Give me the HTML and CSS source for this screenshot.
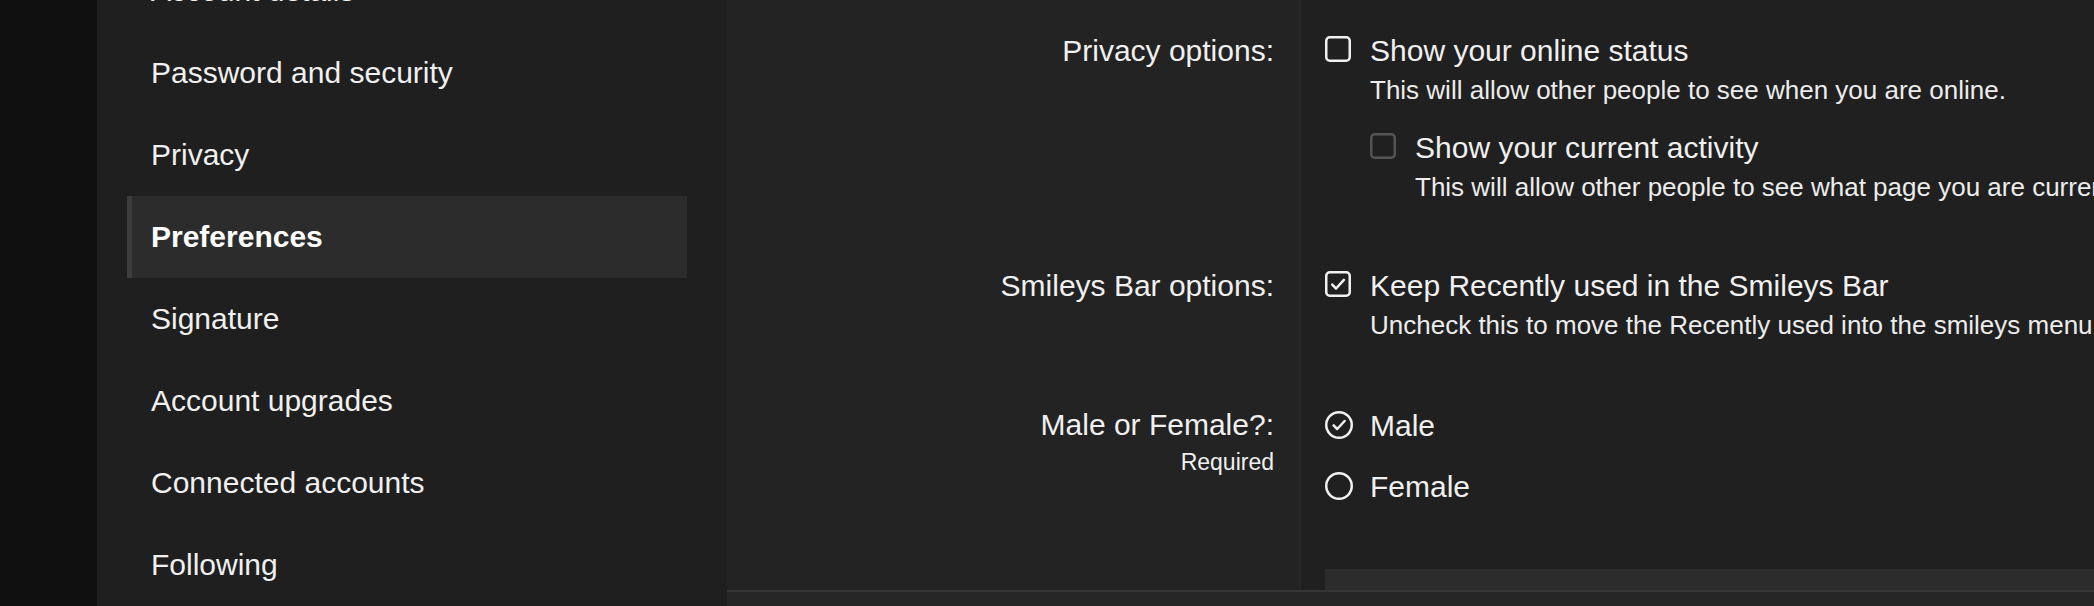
FILE: index.html
```html
<!DOCTYPE html>
<html lang="en">
<head>
<meta charset="utf-8">
<title>Preferences</title>
<link rel="stylesheet" href="styles.css">
</head>
<body>
<div class="page">
  <div class="gutter"></div>
  <aside class="sidebar">
    <nav class="nav">
      <a class="nav-item">Account details</a>
      <a class="nav-item">Password and security</a>
      <a class="nav-item">Privacy</a>
      <a class="nav-item is-active">Preferences</a>
      <a class="nav-item">Signature</a>
      <a class="nav-item">Account upgrades</a>
      <a class="nav-item">Connected accounts</a>
      <a class="nav-item">Following</a>
    </nav>
  </aside>
  <main class="main">
    <div class="form-scroll">
      <div class="form">
        <div class="form-row">
          <div class="form-label">Privacy options:</div>
          <div class="form-input">
            <ul class="choices">
              <li class="choice">
                <svg class="icon icon-box" viewBox="0 0 26 26"><rect x="1.25" y="1.25" width="23.5" height="23.5" rx="3.5" fill="none" stroke="currentColor" stroke-width="2.5"/></svg>
                <div class="choice-body">
                  <div class="choice-text">Show your online status</div>
                  <div class="hint">This will allow other people to see when you are online.</div>
                  <ul class="choices nested">
                    <li class="choice is-disabled">
                      <svg class="icon icon-box" viewBox="0 0 26 26"><rect x="1.25" y="1.25" width="23.5" height="23.5" rx="3.5" fill="none" stroke="currentColor" stroke-width="2.5"/></svg>
                      <div class="choice-body">
                        <div class="choice-text">Show your current activity</div>
                        <div class="hint">This will allow other people to see what page you are currently viewing.</div>
                      </div>
                    </li>
                  </ul>
                </div>
              </li>
            </ul>
          </div>
        </div>

        <div class="form-row">
          <div class="form-label">Smileys Bar options:</div>
          <div class="form-input">
            <ul class="choices">
              <li class="choice">
                <svg class="icon icon-box" viewBox="0 0 26 26"><rect x="1.25" y="1.25" width="23.5" height="23.5" rx="3.5" fill="none" stroke="currentColor" stroke-width="2.5"/><path d="M7.2 13.6l3.9 3.9 7.8-8.6" fill="none" stroke="currentColor" stroke-width="2.5" stroke-linecap="round" stroke-linejoin="round"/></svg>
                <div class="choice-body">
                  <div class="choice-text">Keep Recently used in the Smileys Bar</div>
                  <div class="hint">Uncheck this to move the Recently used into the smileys menu.</div>
                </div>
              </li>
            </ul>
          </div>
        </div>

        <div class="form-row gender-row">
          <div class="form-label">Male or Female?:<span class="required">Required</span></div>
          <div class="form-input">
            <ul class="choices radios">
              <li class="choice">
                <svg class="icon icon-radio" viewBox="0 0 28 28"><circle cx="14" cy="14" r="12.75" fill="none" stroke="currentColor" stroke-width="2.5"/><path d="M8.6 14.4l3.6 3.6 7.4-8" fill="none" stroke="currentColor" stroke-width="2.5" stroke-linecap="round" stroke-linejoin="round"/></svg>
                <div class="choice-body"><div class="choice-text">Male</div></div>
              </li>
              <li class="choice">
                <svg class="icon icon-radio" viewBox="0 0 28 28"><circle cx="14" cy="14" r="12.75" fill="none" stroke="currentColor" stroke-width="2.5"/></svg>
                <div class="choice-body"><div class="choice-text">Female</div></div>
              </li>
            </ul>
          </div>
        </div>

        <div class="form-row submit-row">
          <div class="form-label"></div>
          <div class="form-input">
            <div class="submit-box"></div>
          </div>
        </div>
      </div>
    </div>
    <div class="bottom-bar"></div>
  </main>
</div>
</body>
</html>
```
FILE: styles.css
```css
* { box-sizing: border-box; }

html, body {
  margin: 0;
  padding: 0;
  background: #0f0f0f;
  overflow: hidden;
}

body {
  font-family: "Liberation Sans", Arial, "Helvetica Neue", sans-serif;
  color: #f0f0f0;
}

.page {
  display: flex;
  height: 606px;
  overflow: hidden;
}

.gutter {
  width: 97px;
  flex-shrink: 0;
  background: #0f0f0f;
}

.sidebar {
  width: 630px;
  flex-shrink: 0;
  background: #1f1f1f;
  padding: 0 40px 0 30px;
  overflow: hidden;
}

.nav {
  margin-top: -50px;
}

.nav-item {
  display: block;
  padding: 23px 19px;
  border-left: 5px solid transparent;
  font-size: 30px;
  line-height: 36px;
  color: #f0f0f0;
  white-space: nowrap;
}

.nav-item.is-active {
  background: #2c2c2c;
  border-left-color: #3d3d3d;
  font-weight: bold;
  color: #ffffff;
}

.main {
  flex: 1;
  min-width: 0;
  display: flex;
  flex-direction: column;
  background: #202020;
}

.form-scroll {
  height: 590px;
  flex-shrink: 0;
  overflow: hidden;
}

.form-row {
  display: grid;
  grid-template-columns: 574px 1fr;
}

.form-label {
  background: #232323;
  border-right: 2px solid #282828;
  padding: 33px 25px 32px 0;
  text-align: right;
  font-size: 30px;
  line-height: 36px;
  color: #f0f0f0;
  white-space: nowrap;
}

.required {
  display: block;
  margin-top: 5px;
  font-size: 23px;
  line-height: 28px;
}

.form-input {
  padding: 33px 0 32px 24px;
  min-width: 0;
}

.gender-row .form-label,
.gender-row .form-input {
  padding-top: 34px;
  padding-bottom: 31px;
}

.choices {
  list-style: none;
  margin: 0;
  padding: 0;
}

.choice {
  display: flex;
  align-items: flex-start;
}

.icon {
  flex-shrink: 0;
  margin-top: 3px;
  color: #f0f0f0;
}

.icon-box {
  width: 26px;
  height: 26px;
  margin-right: 19px;
}

.icon-radio {
  width: 28px;
  height: 28px;
  margin-right: 17px;
}

.choice.is-disabled .icon {
  color: #545454;
}

.choice-body {
  min-width: 0;
}

.choice-text {
  font-size: 30px;
  line-height: 36px;
  white-space: nowrap;
}

.hint {
  margin-top: 5px;
  font-size: 26px;
  line-height: 32px;
  color: #ececec;
  white-space: nowrap;
}

.nested {
  margin-top: 24px;
}

.radios {
  margin-top: 1px;
}

.radios .choice + .choice {
  margin-top: 25px;
}

.submit-row .form-input {
  padding-bottom: 0;
}

.submit-box {
  height: 120px;
  background: #2c2c2c;
}

.bottom-bar {
  flex: 1;
  border-top: 2px solid #363636;
  background: #262626;
}
```
